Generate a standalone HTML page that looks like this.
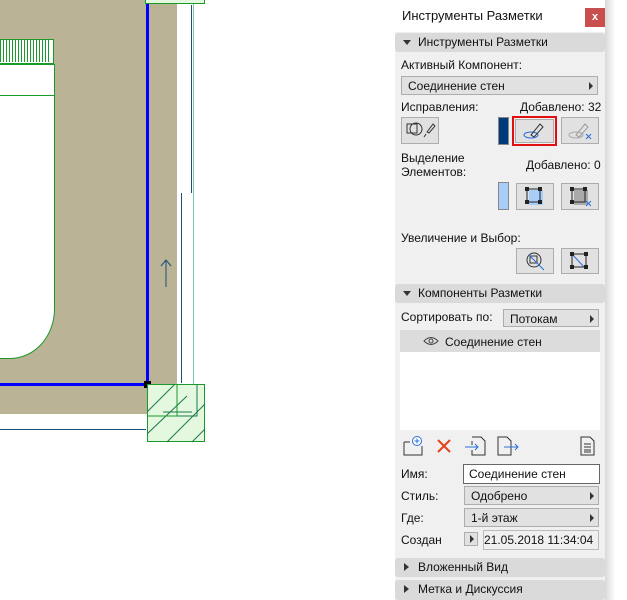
<!DOCTYPE html>
<html><head><meta charset="utf-8"><style>
*{box-sizing:border-box;margin:0;padding:0}
body{width:627px;height:600px;overflow:hidden;background:#fff;position:relative;font-family:"Liberation Sans","DejaVu Sans",sans-serif;font-size:12px;color:#111}
.a{position:absolute}
.t{position:absolute;white-space:nowrap;font-size:12px;line-height:14px}
.hdr{position:absolute;left:395px;width:210px;height:19px;background:#dadada;border-radius:3px}
.hdr span{position:absolute;left:23px;top:2px;font-size:12px}
.tri{position:absolute;left:8px;top:7px;width:0;height:0;border-left:4px solid transparent;border-right:4px solid transparent;border-top:5px solid #333}
.trr{position:absolute;left:9px;top:5px;width:0;height:0;border-top:4px solid transparent;border-bottom:4px solid transparent;border-left:5px solid #333}
.dd{position:absolute;background:#e1e1e1;border:1px solid #adadad}
.dd span{position:absolute;left:6px;top:2px}
.dd i{position:absolute;right:4px;top:5px;border-top:4px solid transparent;border-bottom:4px solid transparent;border-left:4px solid #333}
.btn{position:absolute;background:#e1e1e1;border:1px solid #adadad}
</style></head><body>
<div class="a" style="left:0;top:0;width:177px;height:414px;background:#bab395"></div>
<div class="a" style="left:0;top:39px;width:54px;height:25px;background:#fff;border:1px solid #1a9a2a;border-left:none"></div>
<div class="a" style="left:0;top:40px;width:50px;height:22px;background:repeating-linear-gradient(90deg,#1a9a2a 0 1px,#fff 1px 3px)"></div>
<div class="a" style="left:0;top:64px;width:55px;height:295px;background:#fff;border:1px solid #1a9a2a;border-left:none;border-bottom-right-radius:45px 50px"></div>
<div class="a" style="left:0;top:95px;width:54px;height:1px;background:#1a9a2a"></div>
<div class="a" style="left:177px;top:0;width:16px;height:384px;background:#fff"></div>
<div class="a" style="left:191px;top:5px;width:1px;height:188px;background:#1d4e7a"></div>
<div class="a" style="left:181px;top:193px;width:1px;height:190px;background:#1d4e7a"></div>
<div class="a" style="left:193px;top:0;width:1px;height:384px;background:#7cc8b8"></div>
<div class="a" style="left:146px;top:0;width:3px;height:385px;background:#0000ff"></div>
<div class="a" style="left:0;top:383px;width:148px;height:3px;background:#0000ff"></div>
<div class="a" style="left:144px;top:381px;width:7px;height:7px;background:#000"></div>
<div class="a" style="left:0;top:429px;width:146px;height:1px;background:#1d4e7a"></div>
<div class="a" style="left:145px;top:0;width:60px;height:4px;background:#e4f8e0;border:1px solid #1a9a2a;border-top:none"></div>
<svg class="a" style="left:155px;top:258px" width="20" height="30"><path d="M11 2V29M6 8L11 2L16 8" stroke="#1d4e7a" fill="none"/></svg>
<div class="a" style="left:147px;top:384px;width:58px;height:58px;background:#e4f8e0;border:1px solid #1a9a2a"></div>
<svg class="a" style="left:147px;top:384px" width="60" height="60"><path d="M0 28L28 0M0 50L40 12M20 58L58 20M45 58L58 45M30 0V32H50V0M16 28H45" stroke="#1a7a4a" fill="none"/><rect x="0" y="0" width="30" height="32" fill="none" stroke="#1a9a2a"/></svg>
<div class="a" style="left:605px;top:0;width:10px;height:600px;background:linear-gradient(90deg,#d8d8d8,#fff)"></div>
<div class="a" style="left:395px;top:0;width:210px;height:600px;background:#f0f0f0"></div>
<div class="a" style="left:395px;top:0;width:210px;height:32px;background:#fff"></div>
<div class="t" style="left:402px;top:9px;font-size:13px">Инструменты Разметки</div>
<div class="a" style="left:585px;top:8px;width:20px;height:19px;background:#c94f4f;color:#fff;font-size:11px;font-weight:bold;text-align:center;line-height:18px">x</div>
<div class="hdr" style="top:33px"><div class="tri"></div><span>Инструменты Разметки</span></div>
<div class="t" style="left:401px;top:58px">Активный Компонент:</div>
<div class="dd" style="left:401px;top:76px;width:197px;height:19px"><span>Соединение стен</span><i></i></div>
<div class="t" style="left:401px;top:100px">Исправления:</div>
<div class="t" style="left:520px;top:100px">Добавлено: 32</div>
<div class="btn" style="left:401px;top:117px;width:38px;height:27px"></div>
<svg class="a" style="left:405px;top:120px" width="32" height="22"><rect x="2" y="4" width="10" height="9" fill="none" stroke="#333"/><circle cx="11" cy="9" r="6" fill="none" stroke="#333"/><path d="M22 12L28 4L30 6L24 13ZM21 14l-2 3" stroke="#333" fill="none"/></svg>
<div class="a" style="left:498px;top:117px;width:11px;height:28px;background:#003a7a;border:1px solid #888"></div>
<div class="a" style="left:512px;top:116px;width:45px;height:30px;border:2px solid #e01010"></div>
<div class="btn" style="left:515px;top:119px;width:39px;height:24px"></div>
<svg class="a" style="left:522px;top:121px" width="26" height="20"><ellipse cx="9" cy="14" rx="7" ry="3" fill="none" stroke="#2a6fdc"/><path d="M9 14L18 3L21 6L12 16Z" fill="none" stroke="#333"/></svg>
<div class="btn" style="left:561px;top:117px;width:38px;height:27px"></div>
<svg class="a" style="left:567px;top:121px" width="28" height="20"><ellipse cx="9" cy="14" rx="7" ry="3" fill="none" stroke="#aaa"/><path d="M9 14L18 3L21 6L12 16Z" fill="none" stroke="#999"/><path d="M19 13l5 5M24 13l-5 5" stroke="#2a6fdc"/></svg>
<div class="t" style="left:401px;top:151px">Выделение</div>
<div class="t" style="left:401px;top:165px">Элементов:</div>
<div class="t" style="left:526px;top:158px">Добавлено: 0</div>
<div class="a" style="left:498px;top:182px;width:11px;height:28px;background:#a8cdf8;border:1px solid #888"></div>
<div class="btn" style="left:516px;top:183px;width:38px;height:27px"></div>
<svg class="a" style="left:524px;top:187px" width="24" height="20"><rect x="5" y="3" width="14" height="15" fill="#a8cdf8"/><rect x="3" y="2" width="13" height="13" fill="none" stroke="#222"/><rect x="1" y="0" width="4" height="4" fill="#222"/><rect x="14" y="0" width="4" height="4" fill="#222"/><rect x="1" y="13" width="4" height="4" fill="#222"/><rect x="14" y="13" width="4" height="4" fill="#222"/></svg>
<div class="btn" style="left:561px;top:183px;width:38px;height:27px"></div>
<svg class="a" style="left:569px;top:187px" width="26" height="20"><rect x="5" y="3" width="14" height="15" fill="#aaa"/><rect x="3" y="2" width="13" height="13" fill="none" stroke="#222"/><rect x="1" y="0" width="4" height="4" fill="#222"/><rect x="14" y="0" width="4" height="4" fill="#222"/><rect x="1" y="13" width="4" height="4" fill="#222"/><path d="M17 14l5 5M22 14l-5 5" stroke="#2a6fdc"/></svg>
<div class="t" style="left:401px;top:231px">Увеличение и Выбор:</div>
<div class="btn" style="left:516px;top:248px;width:38px;height:26px"></div>
<svg class="a" style="left:524px;top:250px" width="24" height="24"><circle cx="10" cy="10" r="7" fill="none" stroke="#333"/><rect x="6" y="6" width="7" height="7" fill="none" stroke="#333"/><path d="M5 5L15 15M15 15L20 20" stroke="#2a6fdc"/></svg>
<div class="btn" style="left:561px;top:248px;width:38px;height:26px"></div>
<svg class="a" style="left:569px;top:251px" width="22" height="20"><rect x="3" y="3" width="14" height="13" fill="none" stroke="#222"/><path d="M3 3L15 16" stroke="#2a6fdc"/><rect x="1" y="1" width="4" height="4" fill="#222"/><rect x="15" y="1" width="4" height="4" fill="#222"/><rect x="1" y="14" width="4" height="4" fill="#222"/><rect x="15" y="14" width="4" height="4" fill="#222"/></svg>
<div class="hdr" style="top:284px"><div class="tri"></div><span>Компоненты Разметки</span></div>
<div class="t" style="left:401px;top:310px">Сортировать по:</div>
<div class="dd" style="left:503px;top:309px;width:96px;height:18px"><span>Потокам</span><i></i></div>
<div class="a" style="left:400px;top:330px;width:200px;height:100px;background:#fff"></div>
<div class="a" style="left:400px;top:330px;width:200px;height:22px;background:#dcdcdc"></div>
<svg class="a" style="left:423px;top:335px" width="16" height="12"><path d="M1 6Q8 -1 15 6Q8 13 1 6Z" fill="none" stroke="#444"/><circle cx="8" cy="6" r="2" fill="none" stroke="#444"/></svg>
<div class="t" style="left:445px;top:335px">Соединение стен</div>
<svg class="a" style="left:402px;top:436px" width="24" height="20"><path d="M2 6V19H20V10M2 6H8" stroke="#333" fill="none"/><circle cx="15" cy="5" r="4.5" fill="#fff" stroke="#2a6fdc"/><path d="M15 2.5V7.5M12.5 5H17.5" stroke="#2a6fdc"/></svg>
<svg class="a" style="left:436px;top:438px" width="16" height="16"><path d="M2 2L14 14M14 2L2 14" stroke="#e8401c" stroke-width="2"/></svg>
<svg class="a" style="left:464px;top:436px" width="24" height="20"><path d="M8 1H17L21 5V19H8V14M8 9V5" stroke="#333" fill="none"/><path d="M1 11H14M11 8L14 11L11 14" stroke="#2a6fdc" fill="none"/></svg>
<svg class="a" style="left:496px;top:436px" width="24" height="20"><path d="M2 1H11L15 5V19H2Z" stroke="#333" fill="none"/><path d="M8 11H22M19 8L22 11L19 14" stroke="#2a6fdc" fill="none"/></svg>
<svg class="a" style="left:580px;top:436px" width="16" height="20"><path d="M1 1H10L14 5V19H1Z" stroke="#333" fill="none"/><path d="M4 8H11M4 11H11M4 14H11M4 16H11" stroke="#333"/></svg>
<div class="t" style="left:401px;top:467px">Имя:</div>
<div class="a" style="left:463px;top:464px;width:137px;height:20px;background:#fff;border:1px solid #666"></div>
<div class="t" style="left:469px;top:467px">Соединение стен</div>
<div class="t" style="left:401px;top:489px">Стиль:</div>
<div class="dd" style="left:464px;top:486px;width:135px;height:19px"><span>Одобрено</span><i></i></div>
<div class="t" style="left:401px;top:511px">Где:</div>
<div class="dd" style="left:464px;top:508px;width:135px;height:19px"><span>1-й этаж</span><i></i></div>
<div class="t" style="left:401px;top:533px">Создан</div>
<div class="dd" style="left:464px;top:532px;width:14px;height:14px"><i style="right:3px;top:2px"></i></div>
<div class="a" style="left:483px;top:530px;width:116px;height:20px;border:1px solid #bbb;background:#f0f0f0"></div>
<div class="t" style="left:484px;top:533px">21.05.2018 11:34:04</div>
<div class="hdr" style="top:558px"><div class="trr"></div><span>Вложенный Вид</span></div>
<div class="hdr" style="top:580px;height:20px"><div class="trr"></div><span>Метка и Дискуссия</span></div>
</body></html>
